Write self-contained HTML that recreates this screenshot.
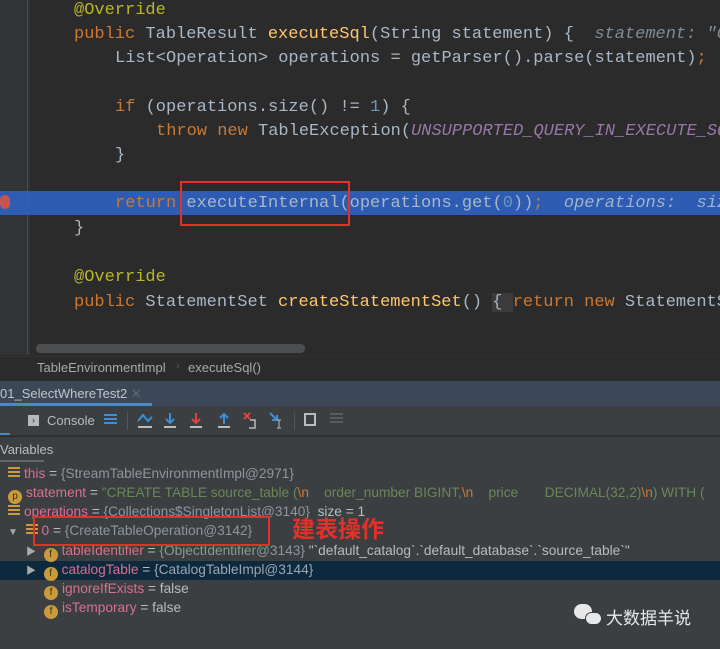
<!DOCTYPE html>
<html><head><meta charset="utf-8"><style>
*{margin:0;padding:0;box-sizing:border-box}
body{width:720px;height:649px;background:#2b2b2b;position:relative;overflow:hidden;font-family:"Liberation Sans","Noto Sans CJK SC",sans-serif}
.code{position:absolute;left:0;font-family:"Liberation Mono",monospace;font-size:17px;color:#a9b7c6;white-space:pre;line-height:24px;height:24px}
.k{color:#cc7832}.a{color:#bbb529}.f{color:#ffc66d}.n{color:#6897bb}.c{color:#9876aa;font-style:italic}.h{color:#7f8b96;font-style:italic}
.abs{position:absolute}
.v{position:absolute;left:0;font-size:13.7px;color:#bbbbbb;white-space:pre;height:19px;line-height:19px}
.nm{color:#d5718f}.g{color:#8e959c}.s{color:#6a8759}
.ic{display:inline-block;width:14px;height:14px;border-radius:7px;background:#c99b3c;color:#3b2f14;font-size:10px;line-height:14px;text-align:center;vertical-align:-2px;margin-right:4px}
.lst{display:inline-block;width:12px;height:12px;vertical-align:-1px;margin-right:4px;background:repeating-linear-gradient(#c99b3c 0 2px,transparent 2px 4px)}
</style></head><body>
<div class="abs" style="left:0;top:0;width:30px;height:355px;background:#313335"></div>
<div class="abs" style="left:27px;top:0;width:1px;height:355px;background:#4a4a4a"></div>
<div class="abs" style="left:0;top:191px;width:720px;height:24px;background:#2f65ca;opacity:.85"></div>
<div class="abs" style="left:0;top:195px;width:10px;height:14px;border-radius:7px;background:#c75450"></div>
<div class="code" style="top:-1px;left:74px"><span class="a">@Override</span></div>
<div class="code" style="top:23px;left:74px"><span class="k">public </span>TableResult <span class="f">executeSql</span>(String statement) {  <span class="h">statement: "C</span></div>
<div class="code" style="top:47px;left:115px">List&lt;Operation&gt; operations = getParser().parse(statement)<span class="k">;</span></div>
<div class="code" style="top:96px;left:115px"><span class="k">if </span>(operations.size() != <span class="n">1</span>) {</div>
<div class="code" style="top:120px;left:156px"><span class="k">throw new </span>TableException(<span class="c">UNSUPPORTED_QUERY_IN_EXECUTE_SQ</span></div>
<div class="code" style="top:144px;left:115px">}</div>
<div class="code" style="top:192px;left:115px"><span class="k">return </span>executeInternal(operations.get(<span class="n">0</span>))<span class="k">;</span>  <span class="h" style="color:#9fb3cc">operations:  siz</span></div>
<div class="code" style="top:217px;left:74px">}</div>
<div class="code" style="top:266px;left:74px"><span class="a">@Override</span></div>
<div class="code" style="top:291px;left:74px"><span class="k">public </span>StatementSet <span class="f">createStatementSet</span>() <span style="background:#3b3b3b">{ </span><span class="k">return new </span>StatementS</div>
<div class="abs" style="left:180px;top:181px;width:170px;height:45px;border:2px solid #e5302a"></div>
<div class="abs" style="left:36px;top:344px;width:269px;height:9px;border-radius:4px;background:#4b4d4f"></div>
<div class="abs" style="left:0;top:356px;width:720px;height:25px;background:#2b2b2b;border-top:1px solid #323232"></div>
<div class="abs" style="left:37px;top:360px;font-size:13px;color:#a9a9a9">TableEnvironmentImpl</div>
<div class="abs" style="left:176px;top:360px;font-size:11px;color:#555">›</div>
<div class="abs" style="left:188px;top:360px;font-size:13px;color:#a9a9a9">executeSql()</div>
<div class="abs" style="left:0;top:381px;width:720px;height:25px;background:#3c4858"></div>
<div class="abs" style="left:0;top:386px;font-size:13px;color:#c0c4c8">01_SelectWhereTest2 <span style="color:#666">✕</span></div>
<div class="abs" style="left:0;top:403px;width:152px;height:3px;background:#4a88c7"></div>
<div class="abs" style="left:0;top:406px;width:720px;height:30px;background:#3c3f41;border-bottom:1px solid #323232"></div>
<div class="abs" style="left:28px;top:415px;width:11px;height:11px;background:#b8b8b8;color:#333;font-size:9px;line-height:11px;text-align:center">›</div>
<div class="abs" style="left:47px;top:413px;font-size:13px;color:#bbb">Console</div>
<div class="abs" style="left:104px;top:414px;width:13px;height:12px;background:repeating-linear-gradient(#3d8fd6 0 2px,transparent 2px 4px)"></div>
<div class="abs" style="left:127px;top:412px;width:1px;height:18px;background:#555"></div>
<svg class="abs" style="left:136px;top:410px" width="160" height="20" viewBox="0 0 160 20" fill="none" stroke-width="2">
<path d="M2 11 L7 5 L12 11 L16 7" stroke="#3d8fd6"/><path d="M2 17h14" stroke="#bbb"/>
<path d="M34 3v9 M30 9l4 4 4-4" stroke="#3d8fd6"/><path d="M28 17h12" stroke="#bbb"/>
<path d="M60 3v9 M56 9l4 4 4-4" stroke="#d9463f"/><path d="M54 17h12" stroke="#bbb"/>
<path d="M88 14v-9 M84 8l4-4 4 4" stroke="#3d8fd6"/><path d="M82 17h12" stroke="#bbb"/>
<path d="M108 3l6 6 M114 3l-6 6" stroke="#d9463f"/><path d="M114 10h5v8h-6" stroke="#bbb" stroke-width="1.5"/>
<path d="M134 3l7 7 M141 5v5h-5" stroke="#3d8fd6"/><path d="M143 10v8 M141 10h4 M141 18h4" stroke="#bbb" stroke-width="1"/>
</svg>
<div class="abs" style="left:294px;top:412px;width:1px;height:18px;background:#555"></div>
<div class="abs" style="left:304px;top:413px;width:12px;height:13px;border:2px solid #bbb"></div>
<div class="abs" style="left:330px;top:413px;width:13px;height:12px;background:repeating-linear-gradient(#5a5c5e 0 2px,transparent 2px 4px)"></div>
<div class="abs" style="left:0;top:433px;width:10px;height:2px;background:#4a88c7"></div>
<div class="abs" style="left:0;top:437px;width:720px;height:25px;background:#3c3f41"></div>
<div class="abs" style="left:0;top:442px;font-size:13px;color:#bbb">Variables</div>
<div class="abs" style="left:0;top:460px;width:44px;height:2px;background:#666"></div>
<div class="abs" style="left:0;top:462px;width:720px;height:187px;background:#3c3f41"></div>
<div class="abs" style="left:0;top:561px;width:720px;height:19px;background:#0d293e"></div>
<div class="v" style="top:464px;left:8px"><span class="lst"></span><span class="nm">this</span> = <span class="g">{StreamTableEnvironmentImpl@2971}</span></div>
<div class="v" style="top:483px;left:8px"><span class="ic">p</span><span class="nm">statement</span> = <span class="s">"CREATE TABLE source_table (<span class="k">\n</span>    order_number BIGINT,<span class="k">\n</span>    price       DECIMAL(32,2)<span class="k">\n</span>) WITH (</span></div>
<div class="v" style="top:502px;left:8px"><span class="lst"></span><span class="nm">operations</span> = <span class="g">{Collections$SingletonList@3140}</span>  size = 1</div>
<div class="v" style="top:521px;left:8px"><span style="color:#aaa;font-size:10px">▼</span>  <span class="lst"></span><span class="nm">0</span> = <span class="g">{CreateTableOperation@3142}</span></div>
<div class="v" style="top:541px;left:26px"><span style="color:#aaa;font-size:10px">▶</span>  <span class="ic">f</span><span class="nm">tableIdentifier</span> = <span class="g">{ObjectIdentifier@3143}</span> "`default_catalog`.`default_database`.`source_table`"</div>
<div class="v" style="top:560px;left:26px"><span style="color:#aaa;font-size:10px">▶</span>  <span class="ic">f</span><span class="nm">catalogTable</span> = <span class="g" style="color:#9aa6b2">{CatalogTableImpl@3144}</span></div>
<div class="v" style="top:579px;left:44px"><span class="ic">f</span><span class="nm">ignoreIfExists</span> = false</div>
<div class="v" style="top:598px;left:44px"><span class="ic">f</span><span class="nm">isTemporary</span> = false</div>
<div class="abs" style="left:33px;top:516px;width:237px;height:30px;border:2px solid #e5302a"></div>
<div class="abs" style="left:292px;top:514px;font-size:23px;font-weight:bold;color:#e5302a;line-height:30px">建表操作</div>
<div class="abs" style="left:574px;top:604px;width:18px;height:15px;border-radius:9px;background:#e8e8e8"></div>
<div class="abs" style="left:585px;top:612px;width:17px;height:13px;border-radius:8px;background:#e8e8e8;border:1px solid #3c3f41"></div>
<div class="abs" style="left:606px;top:604px;font-size:17px;color:#e8e8e8">大数据羊说</div>
</body></html>
